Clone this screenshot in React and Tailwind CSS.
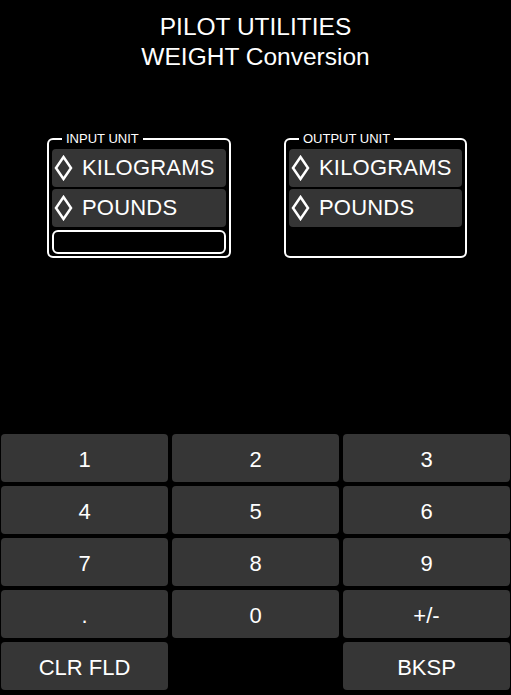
import { useState } from 'react';

const font = { fontFamily: '"Liberation Sans", Arial, sans-serif' };

function Diamond() {
  return (
    <svg width="19" height="26" viewBox="0 0 19 26" className="shrink-0">
      <polygon points="9.5,2 17,13 9.5,24 2,13" fill="none" stroke="white" strokeWidth="2.5" strokeLinejoin="miter" />
    </svg>
  );
}

function UnitOption({ label, onClick }) {
  return (
    <button
      type="button"
      onClick={onClick}
      className="flex h-[38px] w-full items-center gap-[9px] rounded-[4px] bg-[#353535] pl-[2px] text-left text-[22px] leading-none tracking-[0.2px] text-white"
    >
      <Diamond />
      <span>{label}</span>
    </button>
  );
}

function UnitBox({ title, children, width, onPick }) {
  return (
    <fieldset
      className="rounded-[6px] border-2 border-white px-[3px] pb-[2px] pt-[3px]"
      style={{ width }}
    >
      <legend className="ml-[10px] px-[4px] text-[13px] leading-[14px] text-white">{title}</legend>
      <div className="flex flex-col gap-[2px]">
        <UnitOption label="KILOGRAMS" onClick={() => onPick('kg')} />
        <UnitOption label="POUNDS" onClick={() => onPick('lb')} />
      </div>
      {children}
    </fieldset>
  );
}

const keys = ['1', '2', '3', '4', '5', '6', '7', '8', '9', '.', '0', '+/-'];

export default function App() {
  const [value, setValue] = useState('');
  const [inUnit, setInUnit] = useState(null);
  const [outUnit, setOutUnit] = useState(null);

  const press = (k) => {
    if (k === '+/-') {
      setValue((v) => (v.startsWith('-') ? v.slice(1) : '-' + v));
    } else {
      setValue((v) => v + k);
    }
  };

  return (
    <div className="flex min-h-[695px] w-[511px] flex-col bg-black text-white" style={font}>
      <div className="pt-[12px] text-center text-[24.5px] leading-[30px]">
        <div>PILOT UTILITIES</div>
        <div>WEIGHT Conversion</div>
      </div>

      <div className="mt-[60px] flex items-start gap-[53px] pl-[47px]">
        <UnitBox title="INPUT UNIT" width={184} onPick={setInUnit}>
          <div className="mt-[3px] h-[24px] rounded-[6px] border-2 border-white bg-black px-2 text-[16px] leading-[20px]">
            {value}
          </div>
        </UnitBox>
        <UnitBox title="OUTPUT UNIT" width={183} onPick={setOutUnit}>
          <div className="mt-[3px] h-[24px]" />
        </UnitBox>
      </div>

      <div className="mt-auto grid grid-cols-3 gap-[4px] px-[1px] pb-[5px]">
        {keys.map((k) => (
          <button
            key={k}
            type="button"
            onClick={() => press(k)}
            className="h-[48px] rounded-[4px] bg-[#363636] pt-[2px] text-[22px] text-white"
          >
            {k}
          </button>
        ))}
        <button
          type="button"
          onClick={() => setValue('')}
          className="h-[48px] rounded-[4px] bg-[#363636] pt-[2px] text-[22px] text-white"
        >
          CLR FLD
        </button>
        <div />
        <button
          type="button"
          onClick={() => setValue((v) => v.slice(0, -1))}
          className="h-[48px] rounded-[4px] bg-[#363636] pt-[2px] text-[22px] text-white"
        >
          BKSP
        </button>
      </div>
    </div>
  );
}
